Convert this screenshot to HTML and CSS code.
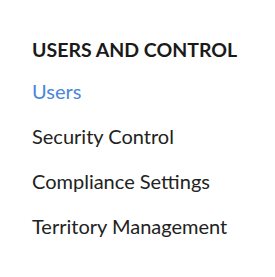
FILE: index.html
```html
<!DOCTYPE html>
<html lang="en">
<head>
    <meta charset="UTF-8">
    <title>Users and Control</title>
    <link rel="stylesheet" href="styles.css">
</head>
<body>
    <nav class="settings-menu">
        <h3 class="menu-title">USERS AND CONTROL</h3>
        <ul class="menu-list">
            <li><a class="menu-link active" href="#">Users</a></li>
            <li><a class="menu-link" href="#">Security Control</a></li>
            <li><a class="menu-link" href="#">Compliance Settings</a></li>
            <li><a class="menu-link" href="#">Territory Management</a></li>
        </ul>
    </nav>
</body>
</html>
```

FILE: styles.css
```css
body {
    margin: 0;
    padding: 0;
    background-color: #fff;
    font-family: Lato, "Open Sans", sans-serif;
}

.settings-menu {
    padding: 38px 32px 0;
}

.menu-title {
    margin: 0;
    font-size: 19.5px;
    font-weight: 700;
    line-height: 24px;
    color: #1a1a1a;
}

.menu-list {
    list-style: none;
    margin: 0;
    padding: 0;
    margin-top: 17px;
}

.menu-list li {
    height: 45px;
}

.menu-link {
    font-size: 20px;
    line-height: 24px;
    color: #222;
    text-decoration: none;
}

.menu-link.active {
    color: #4a86dc;
}
```
